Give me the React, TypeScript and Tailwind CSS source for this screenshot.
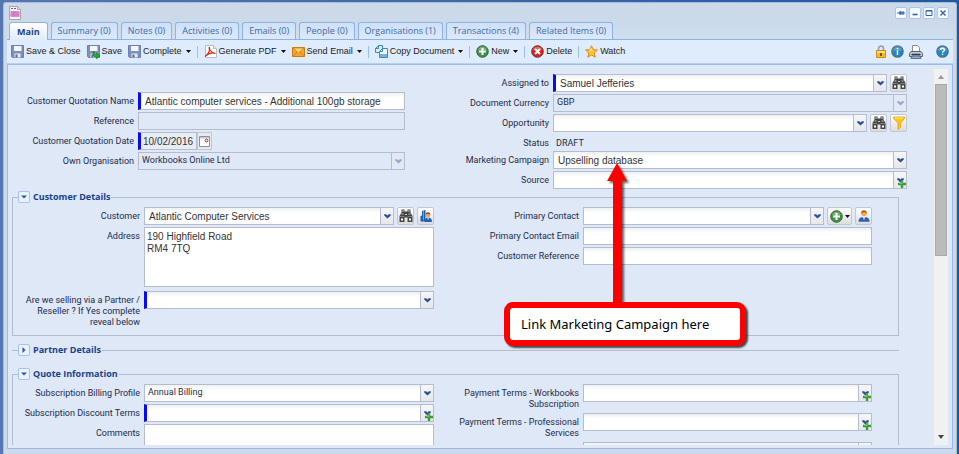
import React, { useId, useState } from 'react';
import clsx from 'clsx';

const TABS = [
  'Main',
  'Summary (0)',
  'Notes (0)',
  'Activities (0)',
  'Emails (0)',
  'People (0)',
  'Organisations (1)',
  'Transactions (4)',
  'Related Items (0)',
];

/* ---------- icons ---------- */

const DocumentIcon = () => (
  <svg viewBox="0 0 12 14" className="w-3 h-[14px]">
    <path d="M.5.5h8l3 3v10H.5z" fill="#f7f2f6" stroke="#a9a3ab" />
    <path d="M8.500.5v3h3" fill="#ddd" stroke="#a9a3ab" />
    <path d="M2 2.500h2M5 2.500h2" stroke="#666" />
    <path d="M1.500 5h9v6h-9z" fill="#dd8fcd" />
    <path d="M1.500 7h9M1.500 9h9M5 5v6" stroke="#c560b3" strokeWidth=".6" />
  </svg>
);

const DiskIcon = ({ arrow = false }: { arrow?: boolean }) => (
  <svg viewBox="0 0 13 13" className="w-[13px] h-[13px] shrink-0 overflow-visible">
    <path d="M.5.5h12v12h-11l-1-1z" fill="#7f8fc0" stroke="#6f7fb0" />
    <path d="M3 1h7.500v5H3z" fill="#f3f6fb" />
    <path d="M3.500 8.500h6v4h-6z" fill="#e6eaf3" />
    <path d="M4.500 9.500h2v3h-2z" fill="#56648f" />
    {arrow && (
      <path d="M6 6.500l1.500.3c-.2 1.700.5 2.700 2 2.700V8l3.500 3-3.500 2.800v-1.500C7 12.300 5.500 10 6 6.500z" fill="#1fae32" stroke="#0e7e1f" strokeWidth=".7" />
    )}
  </svg>
);

const PdfIcon = () => (
  <svg viewBox="0 0 13 13" className="w-[13px] h-[13px] shrink-0">
    <path d="M1.500.5h8l3 3v9h-11z" fill="#fff" stroke="#b9bcc4" />
    <path d="M9.500.5v3h3" fill="#e7e7ea" stroke="#b9bcc4" />
    <path d="M1 11.500C4 10 6.500 5 5.500 2.500 4.500 2 5 7 11.500 8.500 9 7.500 4.500 8.500 1 11.500z" fill="none" stroke="#d9251c" strokeWidth="1.200" />
  </svg>
);

const MailIcon = () => (
  <svg viewBox="0 0 13 12" className="w-[13px] h-3 shrink-0">
    <path d="M.5 1.500h12v9H.5z" fill="#f6a52c" stroke="#c97a14" />
    <path d="M1 10.500l4.500-5M12 10.500l-4.500-5" stroke="#d68617" />
    <path d="M1 2l5.500 5L12 2z" fill="#ffd675" stroke="#cf7f15" strokeWidth=".8" />
  </svg>
);

const CopyIcon = () => (
  <svg viewBox="0 0 13 13" className="w-[13px] h-[13px] shrink-0">
    <path d="M3.500.5h4v7h-7v-4z" fill="#d9edfb" stroke="#3f86b9" />
    <path d="M3.500.5v3h-3" fill="none" stroke="#3f86b9" />
    <path d="M7.500 3.500h5v9h-8v-6z" fill="#eef7fd" stroke="#3f86b9" />
    <path d="M5 9h7v3H5z" fill="#76b5df" />
    <path d="M7.500 3.500v3h-3" fill="none" stroke="#3f86b9" />
  </svg>
);

const PlusIcon = () => (
  <svg viewBox="0 0 13 13" className="w-[13px] h-[13px] shrink-0">
    <circle cx="6.500" cy="6.500" r="5.800" fill="#3e9142" stroke="#38683a" />
    <path d="M2 5a4.800 4.800 0 0 1 9 0z" fill="#74b473" />
    <path d="M6.500 3v7M3 6.500h7" stroke="#fff" strokeWidth="2" />
  </svg>
);

const DeleteIcon = () => (
  <svg viewBox="0 0 13 13" className="w-[13px] h-[13px] shrink-0">
    <circle cx="6.500" cy="6.500" r="5.800" fill="#cf2424" stroke="#7d3030" />
    <path d="M2 5a4.800 4.800 0 0 1 9 0z" fill="#e26560" />
    <path d="M4 4l5 5M9 4l-5 5" stroke="#fff" strokeWidth="2" />
  </svg>
);

const StarIcon = () => (
  <svg viewBox="0 0 13 13" className="w-[13px] h-[13px] shrink-0">
    <path d="M6.500.7l1.700 3.900 4.200.4-3.100 2.900.9 4.300-3.700-2.200-3.700 2.200.9-4.300L.6 5l4.200-.4z" fill="#ffc43a" stroke="#d98a1c" strokeLinejoin="round" />
    <path d="M6.500 2.500l1 2.800 2.500.2H4z" fill="#ffe79a" />
  </svg>
);

const LockIcon = () => (
  <svg viewBox="0 0 10 13" className="w-[10px] h-[13px]">
    <path d="M2.500 6V3.500a2.500 2.500 0 0 1 5 0V6" fill="none" stroke="#9b9b9b" strokeWidth="1.500" />
    <path d="M.5 5.500h9v7h-9z" fill="#f7b924" stroke="#c98b16" />
    <path d="M1 6h8v2H1z" fill="#ffdf7c" />
    <path d="M5 8v3" stroke="#533c0c" strokeWidth="1.500" />
  </svg>
);

const RoundIcon = ({ mark }: { mark: 'info' | 'help' }) => (
  <svg viewBox="0 0 13 13" className="w-[13px] h-[13px]">
    <circle cx="6.500" cy="6.500" r="5.600" fill="#1c8bc4" stroke="#54707f" strokeWidth="1.400" />
    <path d="M2 5.500a4.600 4.600 0 0 1 9 0z" fill="#5b9fc4" />
    {mark === 'info' ? (
      <path d="M6.500 3v1.300M6.500 5.300V10" stroke="#fff" strokeWidth="1.500" />
    ) : (
      <path d="M4.500 5c0-2.400 4-2.400 4 0 0 1.300-2 1.300-2 2.800M6.500 8.800V10" fill="none" stroke="#fff" strokeWidth="1.400" />
    )}
  </svg>
);

const PrinterIcon = () => (
  <svg viewBox="0 0 14 14" className="w-[14px] h-[14px]">
    <path d="M3.500 7V.5h5l2 2V7" fill="#fafafa" stroke="#8a8d94" />
    <path d="M2 6.500h10l1.500 2v3H.5v-3z" fill="#c3c8d2" stroke="#596070" />
    <path d="M2.500 9.500h9" stroke="#2f3747" strokeWidth="1.500" />
    <path d="M3 11h8l1 2.500H2z" fill="#84b4e4" stroke="#4b5568" strokeWidth=".8" />
  </svg>
);

const BinocularsIcon = () => (
  <svg viewBox="0 0 14 14" className="w-[14px] h-[14px]">
    <path d="M2.500.5h3v2h3v-2h3v3l2 3.500v6H8.500V8.500h-3V13H.5V7l2-3.500z" fill="#444" />
    <path d="M3 2h2M9 2h2M2.500 5h2M6 5.500h2M9.500 5h2" stroke="#c9c9c9" />
    <path d="M2 9.500h2v2H2zM10 9.500h2v2h-2z" fill="#fff" />
    <path d="M1 7.500h4.500M8.500 7.500H13" stroke="#8e8e8e" strokeWidth=".8" />
  </svg>
);

const FilterIcon = () => (
  <svg viewBox="0 0 14 14" className="w-[14px] h-[14px]">
    <path d="M1.500 1h11v1.500L8.500 7v4.500L6 13.500V7L1.500 2.500z" fill="#ffc815" stroke="#ee9d13" strokeWidth=".8" />
    <path d="M3 2h8" stroke="#ffe98a" />
  </svg>
);

const CompanyPersonIcon = () => (
  <svg viewBox="0 0 14 14" className="w-[14px] h-[14px]">
    <path d="M1.500 7l1.500-.5V2l3.500-1v11.500h-5z" fill="#1e62b5" />
    <path d="M4.500 2v9" stroke="#7db4ea" strokeWidth=".8" />
    <circle cx="9" cy="6" r="2.300" fill="#f0a64d" />
    <path d="M6.800 5.500C6.500 2.500 11.500 2.500 11.300 5.500 10 4.500 8 4.500 6.800 5.500z" fill="#7c4a17" />
    <path d="M5.500 13C5.500 9 8 8.500 9 8.500s4 .5 4 4.500z" fill="#2462ba" />
    <path d="M8.300 8.500h1.600L9 11z" fill="#fff" />
  </svg>
);

const PersonIcon = () => (
  <svg viewBox="0 0 14 14" className="w-[14px] h-[14px]">
    <circle cx="7" cy="4.500" r="2.800" fill="#f2a955" />
    <path d="M4.200 4.500C3.500.2 10.500.2 9.800 4.500 8.500 2.800 6 2.800 4.200 4.500z" fill="#a4621d" />
    <path d="M1.500 12.800C1.500 9 4 8 7 8s5.500 1 5.500 4.800z" fill="#2361bd" />
    <path d="M5.500 7.800h3L7 11z" fill="#fff" />
    <path d="M7 8.500v2.500" stroke="#de7d1b" />
  </svg>
);

const CalendarIcon = () => (
  <svg viewBox="0 0 11 11" className="w-[11px] h-[11px]">
    <path d="M.5.5h10v10H.5z" fill="#fff" stroke="#8593a8" />
    <path d="M1 1h9v1.500H1z" fill="#b9cbe6" />
    <circle cx="7.500" cy="4.500" r="1.400" fill="#fff" stroke="#b32626" />
  </svg>
);

const Chevron = ({ muted = false }: { muted?: boolean }) => (
  <svg viewBox="0 0 7 5" className="w-[7px] h-[5px]">
    <path d="M.2.3h2L3.500 1.500 4.800.3h2v1.200L3.500 4.600.2 1.500z" fill={muted ? '#93a9d3' : '#294d97'} />
  </svg>
);

const Caret = () => (
  <svg viewBox="0 0 5 3" className="w-[5px] h-[3px] shrink-0">
    <path d="M0 0h5L2.500 3z" fill="#111" />
  </svg>
);

const SmallPlus = () => (
  <svg viewBox="0 0 8 8" className="absolute right-0 bottom-0 w-2 h-2">
    <path d="M4 0v8M0 4h8" stroke="#3c9a3a" strokeWidth="2.400" />
    <path d="M4 1v3M1.500 3.500H4" stroke="#86c77e" strokeWidth=".8" />
  </svg>
);

/* ---------- form parts ---------- */

const labelStyles = 'shrink-0 pt-1 text-right leading-[11px] text-[#1c2b4a]';
const boxStyles = 'h-[18px] w-full min-w-0 border border-[#b5bccf] outline-none';
const whiteStyles = 'bg-white bg-linear-to-b from-[#eef1f1] to-white to-30%';
const typedStyles = "px-1 font-['Liberation_Sans',Arial,sans-serif] text-[10px] text-[#333]";
const plainStyles = 'px-[3px] text-[9px] text-[#1c2b4a]';

type RowProps = {
  label: string;
  labelWidth: string;
  id: string;
  children: React.ReactNode;
};

const Row = ({ label, labelWidth, id, children }: RowProps) => (
  <div className="flex gap-1">
    <label htmlFor={id} className={clsx(labelStyles, labelWidth)}>{label}</label>
    <div className="flex flex-1 min-w-0 items-start gap-[3px]">{children}</div>
  </div>
);

type FieldProps = {
  label: string;
  labelWidth: string;
  value?: string;
  required?: boolean;
  locked?: boolean;
  plain?: boolean;
  add?: boolean;
  children?: React.ReactNode;
};

const fieldStyles = ({ locked, plain, required }: Pick<FieldProps, 'locked' | 'plain' | 'required'>) =>
  clsx(
    boxStyles,
    locked ? 'bg-[#dfe8f6]' : whiteStyles,
    locked || plain ? plainStyles : typedStyles,
    required && 'border-l-[3px] border-l-[#0a0aee]'
  );

const TextField = ({ label, labelWidth, value = '', required, locked, children }: FieldProps) => {
  const id = useId();
  return (
    <Row label={label} labelWidth={labelWidth} id={id}>
      <input
        id={id}
        type="text"
        defaultValue={value}
        readOnly={locked}
        className={fieldStyles({ locked, required })}
      />
      {children}
    </Row>
  );
};

const SelectField = ({ label, labelWidth, value = '', required, locked, plain, add, children }: FieldProps) => {
  const id = useId();
  return (
    <Row label={label} labelWidth={labelWidth} id={id}>
      <div className="relative flex-1 min-w-0">
        <select
          id={id}
          defaultValue={value}
          disabled={locked}
          className={clsx('block appearance-none opacity-100', fieldStyles({ locked, plain, required }))}
        >
          <option value={value}>{value}</option>
        </select>
        <span
          className={clsx(
            'pointer-events-none absolute inset-y-0 right-0 flex w-[14px] items-center justify-center border border-[#b5bccf]',
            locked ? 'bg-[#e3e9f4]' : 'bg-linear-to-b from-[#f6f6f8] to-[#e6e7ea]'
          )}
        >
          <Chevron muted={locked} />
          {add && <SmallPlus />}
        </span>
      </div>
      {children}
    </Row>
  );
};

const IconButton = ({ label, wide, children }: { label: string; wide?: boolean; children: React.ReactNode }) => (
  <button
    aria-label={label}
    className={clsx(
      'flex h-[18px] shrink-0 items-center justify-center gap-[2px] rounded-[2px] border border-[#c3c7cf] bg-linear-to-b from-white to-[#dcdddf]',
      wide ? 'w-[25px]' : 'w-[17px]'
    )}
  >
    {children}
  </button>
);

type SectionProps = {
  title: string;
  open: boolean;
  onToggle: () => void;
  children?: React.ReactNode;
};

const Section = ({ title, open, onToggle, children }: SectionProps) => (
  <fieldset className={clsx('min-w-0 border-[#b5bccf]', open ? 'border' : 'border-t pl-px')}>
    <legend className="ml-[5px] pr-px">
      <button onClick={onToggle} className="flex h-3 items-center gap-[3px] font-['Open_Sans','Noto_Sans',sans-serif] font-bold text-[#15428b]">
        <span className="flex h-3 w-3 items-center justify-center rounded-[2px] border border-[#a3c4ee] bg-[#eaf3ff]">
          <svg viewBox="0 0 6 6" className="w-[6px] h-[6px]">
            <path d={open ? 'M0 1.500h6L3 4.500z' : 'M1.500 0v6l3-3z'} fill="#2857a4" />
          </svg>
        </span>
        {title}
      </button>
    </legend>
    {open && children}
  </fieldset>
);

/* ---------- toolbar ---------- */

type ToolProps = { icon: React.ReactNode; label: string; menu?: boolean };

const Tool = ({ icon, label, menu }: ToolProps) => (
  <button className="flex items-center gap-[2px] whitespace-nowrap">
    {icon}
    <span>{label}</span>
    {menu && <span className="ml-[2px]"><Caret /></span>}
  </button>
);

const Divider = () => <span className="h-3 w-px bg-[#98c0f0]" />;

const WindowButton = ({ label, children }: { label: string; children: React.ReactNode }) => (
  <button aria-label={label} className="flex h-3 w-3 items-center justify-center rounded-[2px] border border-[#a9c6f0] bg-[#f5faff]">
    <svg viewBox="0 0 8 8" className="w-2 h-2" fill="none" stroke="#3a5ea9">{children}</svg>
  </button>
);

const Callout = () => (
  <div className="pointer-events-none absolute top-3 left-[53px] z-10">
    <svg viewBox="0 0 24 142" className="h-[142px] w-6 overflow-visible drop-shadow-[2px_2px_1px_rgba(0,0,0,0.6)]">
      <path d="M11 0l10 18h-5v124H7V18H1z" fill="#f00" />
    </svg>
    <div className="absolute top-[139px] -left-[102px] w-[242px] rounded-[9px] border-[6px] border-[#f00] bg-white px-[11px] py-[6px] font-['Noto_Sans',sans-serif] text-[13px] leading-5 whitespace-nowrap text-black shadow-[2px_2px_2px_rgba(0,0,0,0.7)]">
      Link Marketing Campaign here
    </div>
  </div>
);

const App = () => {
  const [activeTab, setActiveTab] = useState('Main');
  const [sections, setSections] = useState({ customer: true, partner: false, quote: true });
  const addressId = useId();
  const dateId = useId();
  const commentsId = useId();

  const toggle = (key: keyof typeof sections) => setSections((prev) => ({ ...prev, [key]: !prev[key] }));

  return (
    <div className="h-screen overflow-hidden bg-linear-to-r from-[#5577b1] to-[#1f57a0] pt-[2px] pr-[2px] pl-[3px] font-[Roboto,sans-serif] text-[9px]">
      <div className="flex h-full flex-col rounded-t-[3px] border border-b-0 border-[#a9bcd8] bg-[#ccd9e8] px-[3px] pb-[5px]">
        <header className="flex h-[19px] shrink-0 items-center justify-between pr-1 pl-[2px]">
          <DocumentIcon />
          <div className="flex gap-[2px]">
            <WindowButton label="Pin"><path d="M0 4h3M3 2v4M3 3h4v2H3z" fill="#6d9ad0" /></WindowButton>
            <WindowButton label="Minimise"><path d="M1.500 5.500h5" strokeWidth="1.600" /></WindowButton>
            <WindowButton label="Maximise"><path d="M1 1.500h6v5H1zM1 2h6" /></WindowButton>
            <WindowButton label="Close"><path d="M1.500 1.500l5 5M6.500 1.500l-5 5" strokeWidth="1.400" /></WindowButton>
          </div>
        </header>

        <nav className="flex h-[18px] shrink-0 gap-[3px] border-b border-[#8db2e3] bg-linear-to-b from-[#cbdaea] to-[#cfdfee] px-[2px] font-['Open_Sans','Noto_Sans',sans-serif]">
          {TABS.map((tab) => (
            <button
              key={tab}
              onClick={() => setActiveTab(tab)}
              className={clsx(
                'rounded-t-[3px] border border-b-0 border-[#8db2e3] leading-4 whitespace-nowrap',
                tab === activeTab
                  ? '-mb-px bg-linear-to-b from-white to-[#deecfd] px-[7px] font-bold text-[#15428b]'
                  : 'bg-linear-to-b from-[#cfe0f7] to-[#dbe9fb] px-[6px] text-[#416aa3]'
              )}
            >
              {tab}
            </button>
          ))}
        </nav>

        <div className="flex h-6 shrink-0 items-center justify-between border-b border-[#b4d0f4] bg-[#deecfd] pr-1 pl-1 font-['Liberation_Sans',Arial,sans-serif] text-[#222]">
          <div className="flex items-center gap-[6px]">
            <Tool icon={<DiskIcon />} label="Save & Close" />
            <Tool icon={<DiskIcon arrow />} label="Save" />
            <Tool icon={<DiskIcon />} label="Complete" menu />
            <Divider />
            <Tool icon={<PdfIcon />} label="Generate PDF" menu />
            <Tool icon={<MailIcon />} label="Send Email" menu />
            <Divider />
            <Tool icon={<CopyIcon />} label="Copy Document" menu />
            <Divider />
            <Tool icon={<PlusIcon />} label="New" menu />
            <Divider />
            <Tool icon={<DeleteIcon />} label="Delete" />
            <Divider />
            <Tool icon={<StarIcon />} label="Watch" />
          </div>
          <div className="flex items-center gap-[5px]">
            <button aria-label="Lock"><LockIcon /></button>
            <button aria-label="Information"><RoundIcon mark="info" /></button>
            <button aria-label="Print"><PrinterIcon /></button>
            <button aria-label="Help" className="ml-2"><RoundIcon mark="help" /></button>
          </div>
        </div>

        <main className="flex min-h-0 flex-1 border border-[#99bbe8] bg-[#dfe8f6] pr-1 pb-[3px]">
          <form className="min-w-0 flex-1 overflow-hidden pt-[9px] pl-1" onSubmit={(e) => e.preventDefault()}>
            <div className="mr-[27px] grid grid-cols-[393fr_450fr] gap-x-[52px]">
              <div className="flex flex-col gap-[2px] pt-[18px]">
                <TextField label="Customer Quotation Name" labelWidth="w-[122px]" value="Atlantic computer services - Additional 100gb storage" required />
                <TextField label="Reference" labelWidth="w-[122px]" locked />
                <Row label="Customer Quotation Date" labelWidth="w-[122px]" id={dateId}>
                  <div className="flex">
                    <input
                      id={dateId}
                      type="text"
                      defaultValue="10/02/2016"
                      className="h-[18px] w-[59px] border border-l-[3px] border-[#b5bccf] border-l-[#0a0aee] bg-[#e8ecf3] px-[2px] font-['Liberation_Sans',Arial,sans-serif] text-[10px] text-[#333] outline-none"
                    />
                    <button aria-label="Pick a date" className="flex h-[18px] w-[15px] items-center justify-center border border-[#c3c7cf] bg-[#e9e9ec]">
                      <CalendarIcon />
                    </button>
                  </div>
                </Row>
                <SelectField label="Own Organisation" labelWidth="w-[122px]" value="Workbooks Online Ltd" locked />
              </div>

              <div className="flex flex-col gap-[2px]">
                <SelectField label="Assigned to" labelWidth="w-[92px]" value="Samuel Jefferies" required>
                  <IconButton label="Find user"><BinocularsIcon /></IconButton>
                </SelectField>
                <SelectField label="Document Currency" labelWidth="w-[92px]" value="GBP" locked />
                <SelectField label="Opportunity" labelWidth="w-[92px]">
                  <IconButton label="Find opportunity"><BinocularsIcon /></IconButton>
                  <IconButton label="Filter opportunities"><FilterIcon /></IconButton>
                </SelectField>
                <div className="flex h-[15px] gap-1 leading-[11px] text-[#1c2b4a]">
                  <span className="w-[92px] pt-1 text-right">Status</span>
                  <output className="pt-1 pl-[3px]">DRAFT</output>
                </div>
                <div className="relative">
                  <SelectField label="Marketing Campaign" labelWidth="w-[92px]" value="Upselling database" />
                  <div className="absolute top-0 left-24">
                    <Callout />
                  </div>
                </div>
                <SelectField label="Source" labelWidth="w-[92px]" add />
              </div>
            </div>

            <div className="mt-[2px] mr-[35px] flex flex-col">
              <Section title="Customer Details" open={sections.customer} onToggle={() => toggle('customer')}>
                <div className="grid grid-cols-[421fr_418fr] gap-x-5 pt-1 pr-[26px] pb-[7px]">
                  <div className="flex flex-col gap-[2px]">
                    <SelectField label="Customer" labelWidth="w-[127px]" value="Atlantic Computer Services">
                      <IconButton label="Find customer"><BinocularsIcon /></IconButton>
                      <IconButton label="Customer record"><CompanyPersonIcon /></IconButton>
                    </SelectField>
                    <Row label="Address" labelWidth="w-[127px]" id={addressId}>
                      <textarea
                        id={addressId}
                        defaultValue={'190 Highfield Road\nRM4 7TQ'}
                        className="block h-[60px] w-full resize-none border border-[#b5bccf] bg-white px-[2px] py-[3px] font-['Liberation_Sans',Arial,sans-serif] text-[10px] leading-3 text-[#333] outline-none"
                      />
                    </Row>
                    <div className="pt-[2px]">
                      <SelectField label="Are we selling via a Partner / Reseller ? If Yes complete reveal below" labelWidth="w-[127px] pl-2" required />
                    </div>
                  </div>
                  <div className="flex flex-col gap-[2px]">
                    <SelectField label="Primary Contact" labelWidth="w-[125px]">
                      <IconButton label="New contact" wide><PlusIcon /><Caret /></IconButton>
                      <IconButton label="Contact record"><PersonIcon /></IconButton>
                    </SelectField>
                    <TextField label="Primary Contact Email" labelWidth="w-[125px]" />
                    <TextField label="Customer Reference" labelWidth="w-[125px]" />
                  </div>
                </div>
              </Section>

              <div className="mt-2">
                <Section title="Partner Details" open={sections.partner} onToggle={() => toggle('partner')} />
              </div>

              <div className="mt-3">
                <Section title="Quote Information" open={sections.quote} onToggle={() => toggle('quote')}>
                  <div className="grid grid-cols-[421fr_418fr] gap-x-5 pt-1 pr-[26px] pb-2">
                    <div className="flex flex-col gap-[2px]">
                      <SelectField label="Subscription Billing Profile" labelWidth="w-[127px]" value="Annual Billing" plain />
                      <SelectField label="Subscription Discount Terms" labelWidth="w-[127px]" required add />
                      <Row label="Comments" labelWidth="w-[127px]" id={commentsId}>
                        <textarea id={commentsId} className="block h-[60px] w-full resize-none border border-[#b5bccf] bg-white outline-none" />
                      </Row>
                    </div>
                    <div className="flex flex-col gap-[3px]">
                      <SelectField label="Payment Terms - Workbooks Subscription" labelWidth="w-[125px]" add />
                      <SelectField label="Payment Terms - Professional Services" labelWidth="w-[125px]" add />
                      <SelectField label="" labelWidth="w-[125px]" add />
                    </div>
                  </div>
                </Section>
              </div>
            </div>
          </form>

          <div className="mt-1 flex w-[14px] shrink-0 flex-col items-center justify-between bg-[#f1f1f1]">
            <div className="flex w-full flex-col items-center px-px">
              <span className="flex h-[15px] items-center">
                <svg viewBox="0 0 6 4" className="w-[6px] h-1"><path d="M0 4h6L3 0z" fill="#999" /></svg>
              </span>
              <span className="h-[172px] w-full border border-[#a8a8a8] bg-[#bbb]" />
            </div>
            <span className="flex h-4 items-center">
              <svg viewBox="0 0 6 4" className="w-[6px] h-1"><path d="M0 0h6L3 4z" fill="#444" /></svg>
            </span>
          </div>
        </main>
      </div>
    </div>
  );
};

export default App;
